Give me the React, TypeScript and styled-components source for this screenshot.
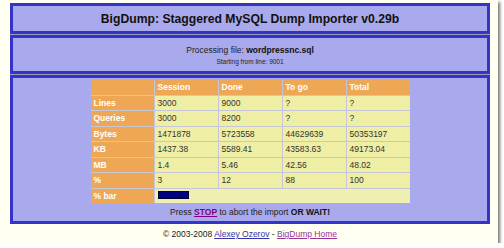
import React from 'react'
import styled, { createGlobalStyle } from 'styled-components'

const Global = createGlobalStyle`
  html, body {
    margin: 0;
    padding: 0;
    background: #ffffff;
  }
  body {
    font-family: "Liberation Sans", Arial, sans-serif;
  }
`

const Frame = styled.div`
  width: 498px;
  height: 243px;
  box-sizing: border-box;
  background: #fffff2;
  box-shadow: 2px 2px 3px rgba(0, 0, 0, 0.55);
  padding: 3px 8px 0 10px;
`

const Panels = styled.div`
  display: flex;
  flex-direction: column;
  gap: 1px;
  background: #9c9cb4;
  width: 480px;
`

const Panel = styled.div<{ $h: number }>`
  box-sizing: border-box;
  height: ${p => p.$h}px;
  border: 3px solid #3434c8;
  background: #a9a9ee;
  display: flex;
  flex-direction: column;
  align-items: center;
`

const Title = styled.h1`
  margin: 0;
  font-size: 12.2px;
  line-height: 26px;
  font-weight: bold;
  color: #111;
`

const Line = styled.p<{ $size: number }>`
  margin: 0;
  font-size: ${p => p.$size}px;
  line-height: ${p => p.$size + 4}px;
  color: #222;
  text-align: center;
  b { color: #111; }
`

const Grid = styled.div`
  margin-top: 2px;
  display: grid;
  grid-template-columns: repeat(5, 63px);
  grid-auto-rows: 14.5px;
  gap: 1px;
  background: #c6c6d8;
`

const Cell = styled.div<{ $kind: 'head' | 'data' }>`
  background: ${p => (p.$kind === 'head' ? '#eea855' : '#eeeea4')};
  color: ${p => (p.$kind === 'head' ? '#ffffff' : '#333')};
  font-weight: ${p => (p.$kind === 'head' ? 'bold' : 'normal')};
  font-size: 8.5px;
  line-height: 14.5px;
  padding-left: 3px;
  white-space: nowrap;
`

const BarCell = styled.div`
  grid-column: span 4;
  background: #efefb2;
  padding: 2px 0 0 3px;
`

const Bar = styled.div`
  height: 8px;
  box-sizing: border-box;
  border: 1px solid #000033;
  background: #000080;
`

const Press = styled.p`
  margin: 3px 0 0;
  font-size: 8.5px;
  line-height: 12px;
  color: #222;
  a {
    color: #800080;
    font-weight: bold;
    text-decoration: underline;
  }
  b { color: #111; }
`

const Footer = styled.p`
  margin: 0;
  width: 480px;
  text-align: center;
  font-size: 8.5px;
  line-height: 20px;
  color: #222;
  a { color: #3333aa; text-decoration: underline; }
  a.visited { color: #993399; }
`

const rows: [string, string, string, string, string][] = [
  ['Lines', '3000', '9000', '?', '?'],
  ['Queries', '3000', '8200', '?', '?'],
  ['Bytes', '1471878', '5723558', '44629639', '50353197'],
  ['KB', '1437.38', '5589.41', '43583.63', '49173.04'],
  ['MB', '1.4', '5.46', '42.56', '48.02'],
  ['%', '3', '12', '88', '100'],
]

const App = () => {
  const percent = 12
  return (
    <>
      <Global />
      <Frame>
        <Panels>
          <Panel $h={31}>
            <Title>BigDump: Staggered MySQL Dump Importer v0.29b</Title>
          </Panel>
          <Panel $h={39}>
            <Line $size={8.5} style={{ marginTop: 6 }}>
              Processing file: <b>wordpressnc.sql</b>
            </Line>
            <Line $size={6.5}>Starting from line: 9001</Line>
          </Panel>
          <Panel $h={149}>
            <Grid>
              {['', 'Session', 'Done', 'To go', 'Total'].map((h, i) => (
                <Cell key={i} $kind="head">{h}</Cell>
              ))}
              {rows.map(r => (
                <React.Fragment key={r[0]}>
                  <Cell $kind="head">{r[0]}</Cell>
                  {r.slice(1).map((v, i) => (
                    <Cell key={i} $kind="data">{v}</Cell>
                  ))}
                </React.Fragment>
              ))}
              <Cell $kind="head">% bar</Cell>
              <BarCell>
                <Bar style={{ width: Math.round(256 * percent / 100) }} />
              </BarCell>
            </Grid>
            <Press>
              Press <a href="#">STOP</a> to abort the import <b>OR WAIT!</b>
            </Press>
          </Panel>
        </Panels>
        <Footer>
          © 2003-2008 <a href="#">Alexey Ozerov</a> - <a href="#" className="visited">BigDump Home</a>
        </Footer>
      </Frame>
    </>
  )
}

export default App
